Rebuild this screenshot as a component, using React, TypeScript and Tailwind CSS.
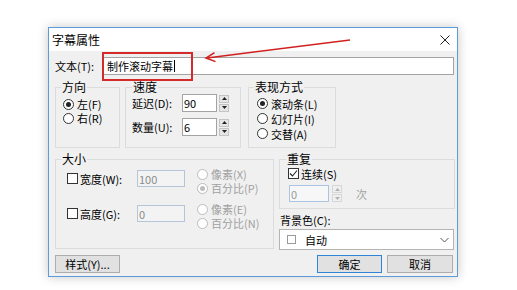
type RadioProps = {
  label: string
  checked?: boolean
  disabled?: boolean
  className?: string
}

function Radio({ label, checked, disabled, className = 'h-[14px]' }: RadioProps) {
  return (
    <div className={`flex items-center ${className}`}>
      <span
        className={`w-[11px] h-[11px] rounded-full border bg-white flex items-center justify-center shrink-0 ${
          disabled ? 'border-[#bcbcbc]' : 'border-[#333333]'
        }`}
      >
        {checked && <span className={`w-[5px] h-[5px] rounded-full ${disabled ? 'bg-[#bcbcbc]' : 'bg-[#222222]'}`} />}
      </span>
      <span className={`ml-[3px] whitespace-nowrap ${disabled ? 'text-[#a0a0a0]' : ''}`}>{label}</span>
    </div>
  )
}

function Checkbox({ checked }: { checked?: boolean }) {
  return (
    <span className="w-[11px] h-[11px] border border-[#333333] bg-white flex items-center justify-center shrink-0">
      {checked && (
        <svg width="9" height="9" viewBox="0 0 9 9">
          <path d="M1 4.5 L3.5 7 L8 1.5" fill="none" stroke="#222" strokeWidth="1.1" />
        </svg>
      )}
    </span>
  )
}

function Spin({ disabled }: { disabled?: boolean }) {
  const arrow = disabled ? '#b0b0b0' : '#222'
  const box = disabled ? 'border-[#d6d6d6] bg-[#f0f0f0]' : 'border-[#c4c4c4] bg-[#e6e6e6]'
  return (
    <div className="flex flex-col gap-[1px] w-[10px]">
      <span className={`h-[8px] border flex items-center justify-center ${box}`}>
        <svg width="5" height="3" viewBox="0 0 5 3">
          <path d="M0 3 L2.5 0 L5 3 Z" fill={arrow} />
        </svg>
      </span>
      <span className={`h-[8px] border flex items-center justify-center ${box}`}>
        <svg width="5" height="3" viewBox="0 0 5 3">
          <path d="M0 0 L5 0 L2.5 3 Z" fill={arrow} />
        </svg>
      </span>
    </div>
  )
}

type GroupProps = {
  title: string
  className: string
  legend?: string
  children: React.ReactNode
}

function Group({ title, className, legend = 'ml-[5px]', children }: GroupProps) {
  return (
    <fieldset className={`border border-[#dcdcdc] m-0 p-0 min-w-0 ${className}`}>
      <legend className={`p-0 px-[1px] leading-[16px] text-[12px] ${legend}`}>{title}</legend>
      {children}
    </fieldset>
  )
}

export default function App() {
  return (
    <div className="relative w-[517px] h-[290px] bg-white pl-[48px] pt-[27px] font-['Noto_Sans_CJK_SC','Microsoft_YaHei',sans-serif] text-[11px] leading-[14px] text-black">
      <div className="w-[410px] h-[250px] border border-[#5d9bd9] bg-[#f0f0f0] shadow-[0_0_10px_rgba(0,0,0,0.22)] flex flex-col">
        {/* title bar */}
        <div className="h-[23px] bg-white flex items-center justify-between pl-[3px] pr-[7px]">
          <span className="text-[12px]">字幕属性</span>
          <svg width="10" height="10" viewBox="0 0 10 10">
            <path d="M0.5 0.5 L9.5 9.5 M9.5 0.5 L0.5 9.5" stroke="#222" strokeWidth="1" />
          </svg>
        </div>

        <div className="flex-1 flex flex-col pl-[6px] pr-[2px]">
          {/* text row */}
          <div className="flex items-center mt-[6px] h-[18px]">
            <span className="w-[47px] whitespace-nowrap">文本(T):</span>
            <div className="flex-1 mr-[1px] h-[18px] border border-[#a3a3a3] bg-white flex items-center pl-[4px]">
              <span>制作滚动字幕</span>
              <span className="w-[1px] h-[12px] bg-black ml-[1px]" />
            </div>
          </div>

          {/* direction / speed / style */}
          <div className="flex items-start mt-[4px]">
            <Group title="方向" className="w-[65px] h-[69px]">
              <div className="pl-[7px] pt-[2px]">
                <Radio label="左(F)" checked />
                <Radio label="右(R)" />
              </div>
            </Group>

            <Group title="速度" legend="ml-[6px]" className="w-[116px] h-[69px] ml-[5px]">
              <div className="pl-[6px] -mt-[1px] flex flex-col gap-[6px]">
                <div className="flex items-center h-[18px]">
                  <span className="w-[50px] whitespace-nowrap">延迟(D):</span>
                  <div className="w-[35px] h-[18px] border border-[#a3a3a3] bg-white pl-[1px] flex items-center">90</div>
                  <div className="ml-[2px]">
                    <Spin />
                  </div>
                </div>
                <div className="flex items-center h-[18px]">
                  <span className="w-[50px] whitespace-nowrap">数量(U):</span>
                  <div className="w-[35px] h-[18px] border border-[#a3a3a3] bg-white pl-[1px] flex items-center">6</div>
                  <div className="ml-[2px]">
                    <Spin />
                  </div>
                </div>
              </div>
            </Group>

            <Group title="表现方式" className="w-[88px] h-[69px] ml-[7px]">
              <div className="pl-[8px] pt-[1px]">
                <Radio label="滚动条(L)" checked className="h-[15px]" />
                <Radio label="幻灯片(I)" className="h-[15px]" />
                <Radio label="交替(A)" className="h-[15px]" />
              </div>
            </Group>
          </div>

          {/* size / repeat / background */}
          <div className="flex items-start mt-[3px]">
            <Group title="大小" className="w-[219px] h-[98px]">
              <div className="flex flex-col gap-[7px]">
                <div className="flex items-start">
                  <div className="flex items-center h-[17px] mt-[3px] pl-[11px]">
                    <Checkbox />
                    <span className="ml-[2px] w-[57px] whitespace-nowrap">宽度(W):</span>
                    <div className="w-[48px] h-[17px] border border-[#b5c5da] bg-[#f3f3f3] text-[#8c8c8c] flex items-center pl-[1px]">100</div>
                  </div>
                  <div className="ml-[12px]">
                    <Radio label="像素(X)" disabled />
                    <Radio label="百分比(P)" disabled checked />
                  </div>
                </div>
                <div className="flex items-start">
                  <div className="flex items-center h-[17px] mt-[3px] pl-[11px]">
                    <Checkbox />
                    <span className="ml-[2px] w-[57px] whitespace-nowrap">高度(G):</span>
                    <div className="w-[48px] h-[17px] border border-[#b5c5da] bg-[#f3f3f3] text-[#8c8c8c] flex items-center pl-[1px]">0</div>
                  </div>
                  <div className="ml-[12px]">
                    <Radio label="像素(E)" disabled />
                    <Radio label="百分比(N)" disabled />
                  </div>
                </div>
              </div>
            </Group>

            <div className="flex-1 ml-[5px] flex flex-col">
              <Group title="重复" legend="ml-[6px]" className="h-[58px]">
                <div className="flex items-center h-[13px] pl-[8px]">
                  <Checkbox checked />
                  <span className="ml-[2px]">连续(S)</span>
                </div>
                <div className="flex items-center h-[17px] mt-[5px] pl-[9px]">
                  <div className="w-[40px] h-[17px] border border-[#a9c4e4] bg-[#f7f7f7] text-[#9a9a9a] flex items-center pl-[1px]">0</div>
                  <div className="ml-[3px]">
                    <Spin disabled />
                  </div>
                  <span className="ml-[14px] text-[#a0a0a0]">次</span>
                </div>
              </Group>
              <span className="mt-[4px] pl-[1px]">背景色(C):</span>
              <div className="mt-[2px] mr-[1px] h-[21px] border border-[#b4b4b4] bg-white flex items-center pl-[7px] pr-[4px]">
                <span className="w-[9px] h-[9px] border border-[#9a9a9a] bg-white" />
                <span className="ml-[9px]">自动</span>
                <svg className="ml-auto" width="9" height="6" viewBox="0 0 9 6">
                  <path d="M0.5 1 L4.5 5 L8.5 1" fill="none" stroke="#555" strokeWidth="1" />
                </svg>
              </div>
            </div>
          </div>

          {/* buttons */}
          <div className="flex items-center mt-[5px] pr-[2px]">
            <button className="w-[65px] h-[18px] border border-[#adadad] bg-[#e1e1e1] flex items-center justify-center">样式(Y)...</button>
            <button className="ml-auto w-[65px] h-[18px] border border-[#2f86d8] bg-[#e1e1e1] flex items-center justify-center">确定</button>
            <button className="ml-[5px] w-[66px] h-[18px] border border-[#adadad] bg-[#e1e1e1] flex items-center justify-center">取消</button>
          </div>
        </div>
      </div>

      {/* annotation overlay */}
      <div className="absolute left-[102px] top-[52px] w-[91px] h-[29px] border-2 border-[#d42a2a]" />
      <svg className="absolute left-0 top-0 pointer-events-none" width="517" height="290" viewBox="0 0 517 290">
        <line x1="350" y1="40" x2="207" y2="58" stroke="#d0201f" strokeWidth="1.5" />
        <polyline points="214.5,52.7 206,58 215.5,61.6" fill="none" stroke="#d0201f" strokeWidth="1.5" />
      </svg>
    </div>
  )
}
